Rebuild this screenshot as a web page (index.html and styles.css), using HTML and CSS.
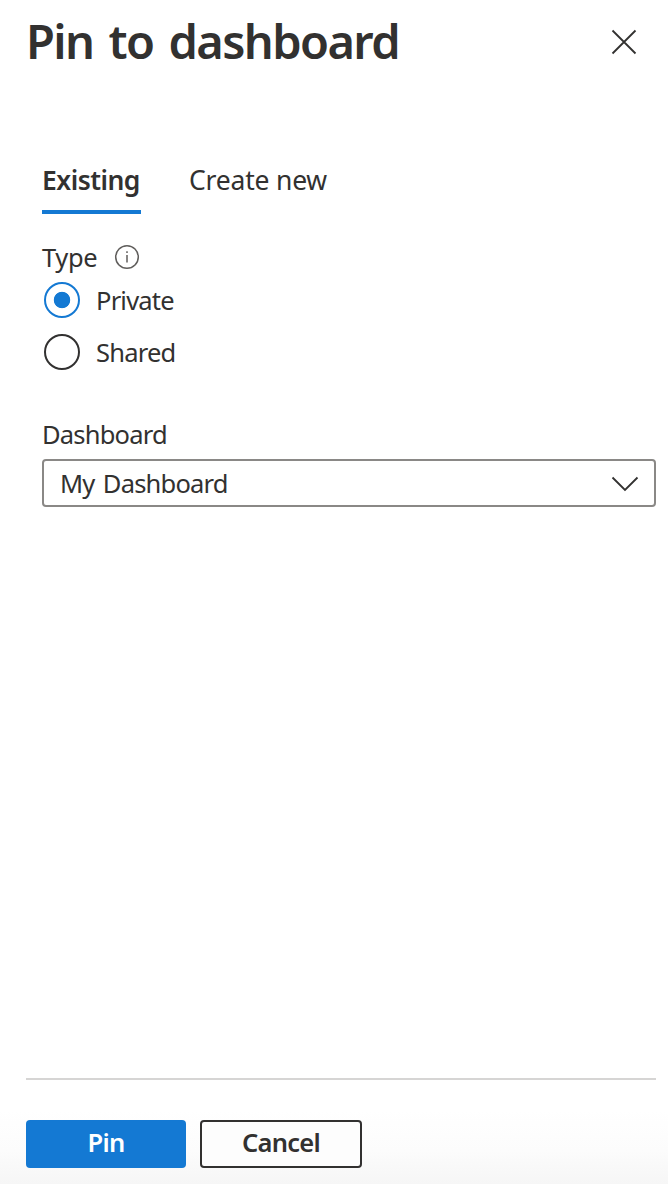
FILE: index.html
```html
<!DOCTYPE html>
<html lang="en">
<head>
<meta charset="utf-8">
<title>Pin to dashboard</title>
<link rel="stylesheet" href="styles.css">
</head>
<body>
<section class="panel">
  <header class="header">
    <h1 class="title">Pin to dashboard</h1>
    <button class="close" aria-label="Close"><svg width="26" height="26" viewBox="0 0 26 26"><path d="M1.5 1.5 24.5 24.5M24.5 1.5 1.5 24.5"/></svg></button>
  </header>
  <nav class="tabs">
    <a class="tab tab-active">Existing</a>
    <a class="tab tab-new">Create new</a>
  </nav>
  <div class="type-row">
    <span class="type-label">Type</span>
    <svg class="info" width="26" height="26" viewBox="0 0 26 26"><circle cx="13" cy="13" r="11.3"/><path d="M13 11v7.5M13 7.2v1.8"/></svg>
  </div>
  <div class="radios">
    <label class="option"><span class="radio radio-on"></span><span class="option-text">Private</span></label>
    <label class="option"><span class="radio"></span><span class="option-text">Shared</span></label>
  </div>
  <div class="field-label">Dashboard</div>
  <div class="select"><span class="value">My Dashboard</span><svg class="chevron" width="28" height="16" viewBox="0 0 28 16"><path d="M1.5 1.5 14 14 26.5 1.5"/></svg></div>
  <footer class="footer">
    <button class="btn btn-primary">Pin</button>
    <button class="btn btn-secondary">Cancel</button>
  </footer>
</section>
</body>
</html>
```
FILE: styles.css
```css
* { box-sizing: border-box; }
body { margin: 0; background: #fff; color: #323130; font: 25.5px/36px "Noto Sans", "Open Sans", sans-serif; }
.panel { height: 1184px; display: flex; flex-direction: column; padding: 0 12px 16px 26px; white-space: nowrap; background: linear-gradient(to bottom, #fff 1110px, #fcfcfc 1150px, #f6f6f6 1184px); }
.header { display: flex; justify-content: space-between; height: 84px; align-items: center; padding-right: 19px; }
.title { margin: 0; padding-bottom: 2px; font-size: 47px; line-height: 64px; font-weight: 600; letter-spacing: -1.6px; word-spacing: 4.5px; }
.close { border: 0; padding: 0; background: none; height: 26px; }
svg { display: block; fill: none; stroke: #323130; stroke-width: 1.8; }
.tabs { display: flex; gap: 48px; margin: 78px 0 0 16px; height: 52px; font-size: 26.5px; }
.tab-active { width: 99px; font-weight: 600; letter-spacing: -.5px; border-bottom: 4px solid #1479d3; }
.tab-new { letter-spacing: -.2px; }
.type-row { display: flex; align-items: center; margin: 25px 0 0 16px; height: 36px; }
.type-label { width: 56px; letter-spacing: -.35px; }
.info { margin-left: 16px; stroke: #605e5c; stroke-width: 1.5; }
.radios { margin: 7px 0 0 18px; display: grid; gap: 16px; }
.option { display: flex; align-items: center; gap: 16px; height: 36px; }
.option-text { letter-spacing: -.8px; }
.radio { width: 36px; height: 36px; border: 2px solid #323130; border-radius: 50%; }
.radio-on { border-color: #1479d3; background: radial-gradient(circle, #1479d3 7.8px, #fff 8.6px); }
.field-label { margin: 46px 0 0 16px; height: 43px; letter-spacing: -.8px; }
.select { margin-left: 16px; height: 48px; border: 2px solid #8a8886; border-radius: 4px; display: flex; align-items: center; justify-content: space-between; padding: 0 15px 0 16px; background: #fff; }
.value { letter-spacing: -.8px; word-spacing: 2.5px; }
.chevron { margin-top: 2px; }
.footer { margin-top: auto; height: 90px; border-top: 2px solid #d6d5d4; padding-top: 40px; display: flex; gap: 14px; }
.btn { height: 48px; border-radius: 4px; font: 600 25.5px/40px "Noto Sans", "Open Sans", sans-serif; letter-spacing: -.7px; padding: 0 0 4px; color: #323130; }
.btn-primary { width: 160px; border: 0; background: #1479d3; color: #fff; }
.btn-secondary { width: 162px; border: 2px solid #323130; background: #fdfdfd; }
```
